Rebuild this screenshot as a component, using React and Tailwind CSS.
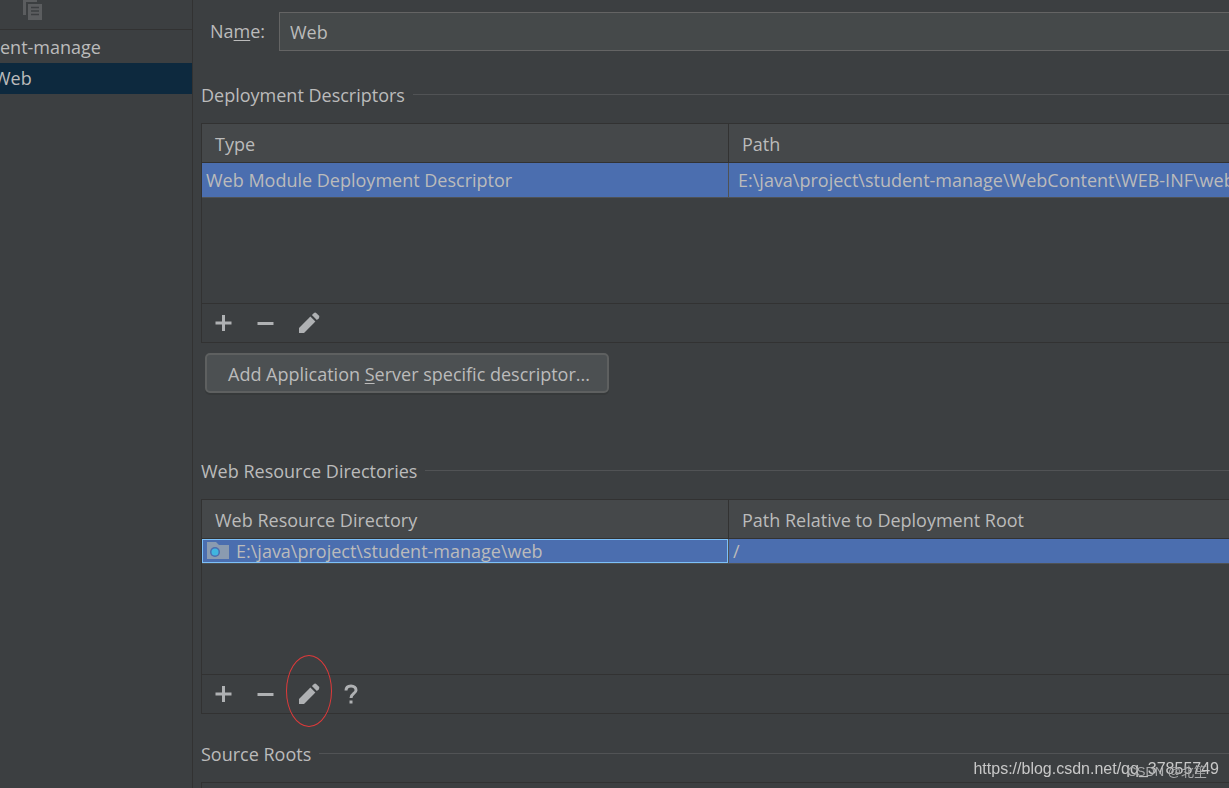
import React, { useState } from 'react';

const AddIcon = () => (
  <svg width="18" height="18" viewBox="0 0 18 18" fill="#afb1b3" aria-hidden="true">
    <path d="M8 1h3v6.5h6.500v3H11V17H8v-6.500H1.500v-3H8z" />
  </svg>
);

const RemoveIcon = () => (
  <svg width="18" height="18" viewBox="0 0 18 18" fill="#afb1b3" aria-hidden="true">
    <path d="M1.500 8h16v3h-16z" />
  </svg>
);

const EditIcon = () => (
  <svg width="22" height="22" viewBox="0 0 22 22" fill="#afb1b3" aria-hidden="true">
    <path d="M1 16L12.400 4.600l5 5L6 21H1z" />
    <path d="M13.900 3.100l1.900-1.900q1.300-1.200 2.600 0l2.400 2.400q1.200 1.300 0 2.600l-1.900 1.900z" />
  </svg>
);

const HelpIcon = () => (
  <svg width="16" height="20" viewBox="0 0 16 20" fill="none" aria-hidden="true">
    <path d="M3 6.500C3 3.500 5 2 8 2s5 1.700 5 4.200C13 9.500 8 9.500 8 14" stroke="#afb1b3" strokeWidth="3" />
    <path d="M6.500 16.500h3v3h-3z" fill="#afb1b3" />
  </svg>
);

const CopyIcon = () => (
  <svg width="20" height="24" viewBox="0 0 20 24" aria-hidden="true">
    <path d="M0 0h14v2H3v13H0z" fill="#5b5d5f" />
    <path d="M5 4h14v16H5z" fill="#5b5d5f" />
    <path d="M8 7.500h8M8 11h8M8 14.500h8" stroke="#3c3f41" strokeWidth="1.300" />
  </svg>
);

const WebFolderIcon = () => (
  <svg width="24" height="20" viewBox="0 0 24 20" className="shrink-0" aria-hidden="true">
    <path d="M1 1h9l3 3h10v14H1z" fill="#8a9bb0" />
    <circle cx="9" cy="11" r="5" fill="#4b6eaf" />
    <circle cx="9" cy="11" r="3.500" fill="#40b6e0" />
  </svg>
);

const SectionTitle = ({ children }) => (
  <h2 className="flex items-center gap-2 leading-6">
    {children}
    <span className="flex-1 h-px mb-[2px] bg-[#515355]" />
  </h2>
);

const ToolButton = ({ label, children }) => (
  <button type="button" aria-label={label} className="relative w-[42px] h-[38px] flex items-center justify-center">
    {children}
  </button>
);

const TableHead = ({ first, second }) => (
  <thead className="bg-[#45484a]">
    <tr>
      <th className="w-[527px] h-[39px] pl-[13px] pt-[2px] text-left font-normal border-b border-r border-[#323232]">{first}</th>
      <th className="h-[39px] pl-[13px] pt-[2px] text-left font-normal border-b border-[#323232]">{second}</th>
    </tr>
  </thead>
);

const App = () => {
  const [name, setName] = useState('Web');

  return (
    <div className="flex min-h-screen overflow-hidden bg-[#3c3f41] text-[#bbbbbb] text-[18px] font-['Open_Sans','Noto_Sans_CJK_SC',sans-serif]">
      {/* Facet tree */}
      <aside className="w-[193px] shrink-0 overflow-hidden border-r border-[#323232]">
        <div className="h-[30px] pl-[23px] border-b border-[#323232]">
          <button type="button" aria-label="Copy" className="block">
            <CopyIcon />
          </button>
        </div>
        <ul className="pt-[2px] leading-[31px]">
          <li>ent-manage</li>
          <li className="bg-[#0d293e]">
            <span className="-ml-[6px]">Web</span>
          </li>
        </ul>
      </aside>

      {/* Facet settings */}
      <main className="flex-1 min-w-0 pl-2 pt-3">
        <div className="flex items-center">
          <label htmlFor="facet-name" className="w-[78px] shrink-0 pl-[9px]">
            Na<span className="underline underline-offset-2">m</span>e:
          </label>
          <input
            id="facet-name"
            value={name}
            onChange={(e) => setName(e.target.value)}
            className="flex-1 min-w-0 h-[39px] px-[10px] bg-[#45494a] border border-r-0 border-[#646464] outline-none"
          />
        </div>

        <section className="pt-8">
          <SectionTitle>Deployment Descriptors</SectionTitle>
          <div className="mt-4 border-y border-l border-[#323232]">
            <div className="h-[179px]">
              <table className="w-full table-fixed border-separate border-spacing-0">
                <TableHead first="Type" second="Path" />
                <tbody className="bg-[#4b6eaf]">
                  <tr>
                    <td className="h-[35px] pl-1 border-b border-r border-[#4f5254]">Web Module Deployment Descriptor</td>
                    <td className="h-[35px] pl-[9px] border-b border-[#4f5254] whitespace-nowrap overflow-hidden">
                      E:\java\project\student-manage\WebContent\WEB-INF\web.xml
                    </td>
                  </tr>
                </tbody>
              </table>
            </div>
            <div className="flex border-t border-[#323232]">
              <ToolButton label="Add"><AddIcon /></ToolButton>
              <ToolButton label="Remove"><RemoveIcon /></ToolButton>
              <ToolButton label="Edit">
                <span className="pl-1"><EditIcon /></span>
              </ToolButton>
            </div>
          </div>
          <button
            type="button"
            className="block ml-1 mt-[10px] h-10 pl-[21px] pr-[17px] pt-[2px] rounded-[5px] border-2 border-[#5e6060] bg-[#4c5052] shadow-[0_2px_0_#36393a]"
          >
            Add Application <span className="underline underline-offset-2">S</span>erver specific descriptor...
          </button>
        </section>

        <section className="pt-[66px]">
          <SectionTitle>Web Resource Directories</SectionTitle>
          <div className="mt-4 border-y border-l border-[#323232]">
            <div className="h-[174px]">
              <table className="w-full table-fixed border-separate border-spacing-0">
                <TableHead first="Web Resource Directory" second="Path Relative to Deployment Root" />
                <tbody className="bg-[#4b6eaf]">
                  <tr>
                    <td className="border-b border-r border-[#4f5254]">
                      <div className="flex items-center gap-[6px] h-6 pl-[3px] border border-[#7cc0f8] leading-5">
                        <WebFolderIcon />
                        E:\java\project\student-manage\web
                      </div>
                    </td>
                    <td className="pl-1 border-b border-[#4f5254] leading-6">/</td>
                  </tr>
                </tbody>
              </table>
            </div>
            <div className="flex border-t border-[#323232]">
              <ToolButton label="Add"><AddIcon /></ToolButton>
              <ToolButton label="Remove"><RemoveIcon /></ToolButton>
              <ToolButton label="Edit">
                <span className="pl-1"><EditIcon /></span>
                <span className="absolute left-0 -top-5 w-[46px] h-[72px] rounded-[50%] border border-[#e03a3a]" />
              </ToolButton>
              <ToolButton label="Help">
                <span className="pl-1"><HelpIcon /></span>
              </ToolButton>
            </div>
          </div>
        </section>

        <section className="pt-7">
          <SectionTitle>Source Roots</SectionTitle>
          <div className="mt-4 h-[6px] border-t border-l border-[#323232]" />
        </section>
      </main>

      {/* Watermarks */}
      <div className="fixed right-[10px] bottom-[7px] text-[16px] leading-6 text-[#c8c8c8] font-['Liberation_Sans',sans-serif]">
        https://blog.csdn.net/qq_37855749
      </div>
      <div className="fixed right-[22px] bottom-2 text-[13px] leading-4 text-[#a8a9aa] font-['Liberation_Sans','Noto_Sans_CJK_SC',sans-serif]">
        CSDN @北笙
      </div>
    </div>
  );
};

export default App;
